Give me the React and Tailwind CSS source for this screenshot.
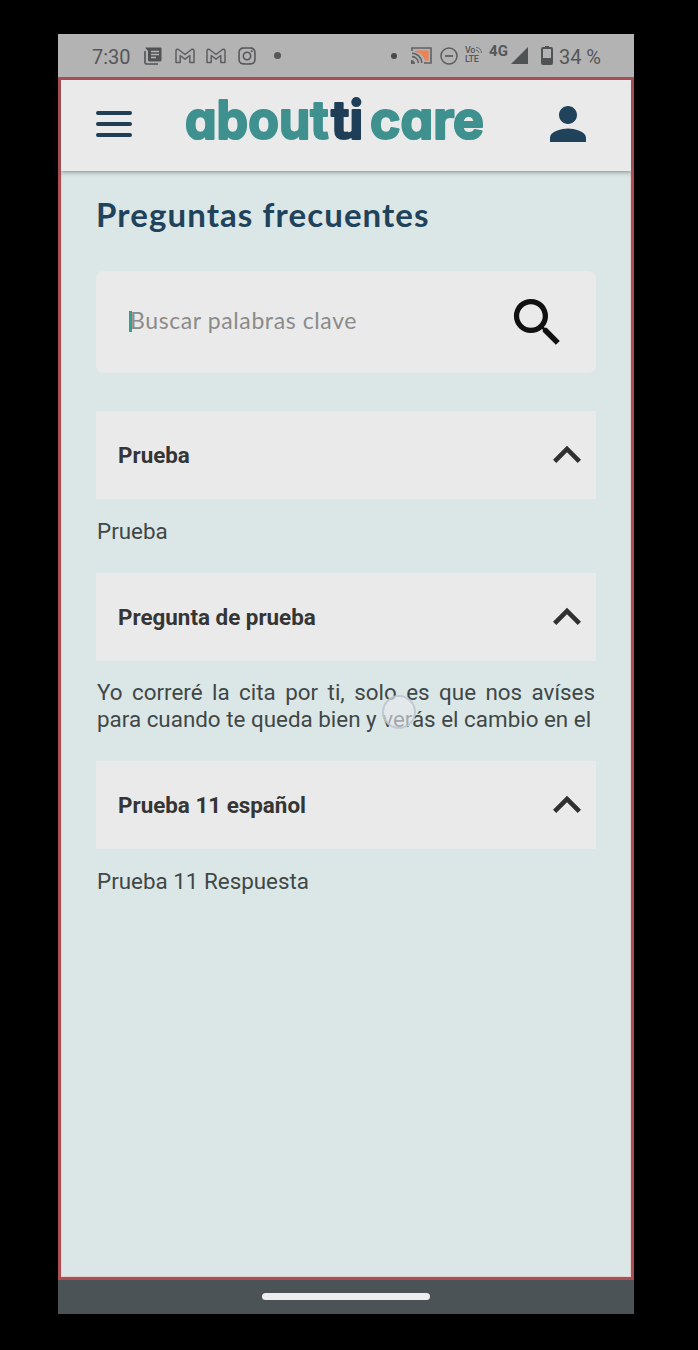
import { MdPerson, MdSearch, MdKeyboardArrowUp } from "react-icons/md";
import { FaInstagram } from "react-icons/fa";

function NewsIcon() {
  return (
    <svg className="h-[18px] w-[18px]" viewBox="0 0 18 18">
      <path d="M1 4v11.5a1.5 1.5 0 0 0 1.500 1.500H14" fill="none" stroke="#505354" strokeWidth="1.600" />
      <path d="M1 .5H16.500a1 1 0 0 1 1 1V13a1.500 1.500 0 0 1-1.500 1.500H5.500A1.500 1.500 0 0 1 4 13V4Z" fill="#505354" />
      <path d="M7 4.500h8M7 7.500h8M7 10.500h5" stroke="#b3b3b3" strokeWidth="1.300" />
    </svg>
  );
}

function MailIcon() {
  return (
    <svg className="h-4 w-5" viewBox="0 0 20 16" fill="none" stroke="#5c5f60" strokeWidth="1.500" strokeLinejoin="round">
      <path d="M1 2.500Q1.500.500 3.500 1.500L10 6.500l6.500-5Q18.500.500 19 2.500V14.500h-4.200V7.500L10 11.200 5.200 7.500v7H1Z" />
    </svg>
  );
}

function CastIcon() {
  return (
    <svg className="h-[17px] w-[21px]" viewBox="0 0 21 17">
      <path d="M4 3.500h13.500v10H14C12.500 8.500 9 5.500 4 5Z" fill="#ee8152" />
      <path d="M1 4V1h19v15h-7" fill="none" stroke="#606263" strokeWidth="1.600" />
      <path d="M1 6.200A9.800 9.800 0 0 1 10.800 16M1 9.600A6.400 6.400 0 0 1 7.400 16" fill="none" stroke="#606263" strokeWidth="1.600" />
      <path d="M0 13a4 4 0 0 1 4 4H0Z" fill="#606263" />
    </svg>
  );
}

function StatusBar() {
  return (
    <div className="flex h-[43px] shrink-0 items-center bg-[#b3b3b3] pl-[34px] pr-[33px] text-[20px] text-[#555758]">
      <span className="w-[52px] pt-[2px] text-[20px] leading-none">7:30</span>
      <div className="flex items-center">
        <NewsIcon />
        <span className="ml-[13px] flex"><MailIcon /></span>
        <span className="ml-[11px] flex"><MailIcon /></span>
        <FaInstagram className="ml-[11px] h-[20px] w-[20px]" />
        <span className="ml-[17px] h-[7px] w-[7px] rounded-full bg-[#555758]" />
      </div>
      <div className="ml-auto flex items-center">
        <span className="mr-[14px] h-[6px] w-[6px] rounded-full bg-[#454849]" />
        <CastIcon />
        <svg className="ml-[8px] h-[18px] w-[18px]" viewBox="0 0 18 18" fill="none" stroke="#5b5d5e">
          <circle cx="9" cy="9" r="8" strokeWidth="1.500" />
          <path d="M5 9h8" strokeWidth="1.800" />
        </svg>
        <div className="-mt-[2px] ml-[7px] flex w-[19px] flex-col text-[9px] font-medium leading-[9px] tracking-[-0.3px]">
          <span className="flex items-start">
            Vo
            <svg className="ml-px mt-px h-[6px] w-[6px]" viewBox="0 0 6 6" fill="none" stroke="#6b6d6e" strokeWidth="1">
              <path d="M0 .5Q5 .5 5.500 6M0 3Q2.500 3 3 6" />
            </svg>
          </span>
          <span>LTE</span>
        </div>
        <span className="-mt-[8px] ml-[5px] text-[15px] font-bold leading-none">4G</span>
        <svg className="ml-[3px] h-[17px] w-[17px]" viewBox="0 0 17 17"><path d="M17 0V17H0Z" fill="#505354" /></svg>
        <svg className="ml-[13px] h-[19px] w-[12px]" viewBox="0 0 12 19">
          <path d="M4 1.500V0h4v1.500" fill="#505354" />
          <rect x="1" y="2" width="10" height="16" rx="1" fill="none" stroke="#505354" strokeWidth="2" />
          <path d="M1 12h10v6H1Z" fill="#505354" />
        </svg>
        <span className="ml-[6px] whitespace-nowrap pt-[2px] text-[20px] leading-none">34 %</span>
      </div>
    </div>
  );
}

function Logo() {
  return (
    <svg
      className="h-[84px] w-[320px] font-[Inter,sans-serif] text-[53px] font-bold [font-feature-settings:'cv11']"
      viewBox="0 0 320 84"
      role="img"
      aria-label="aboutti care"
      strokeWidth="2.2"
      strokeLinejoin="round"
    >
      <text x="9" y="55.5" textLength="143.500" lengthAdjust="spacingAndGlyphs" fill="#3f918f" stroke="#3f918f">about</text>
      <text x="155" y="55.5" textLength="32" lengthAdjust="spacingAndGlyphs" fill="#1f3e57" stroke="#1f3e57">ti</text>
      <path d="M166 52.500Q176 54 180 48" fill="none" stroke="#1f3e57" strokeWidth="6.500" />
      <text x="194" y="55.5" textLength="114" lengthAdjust="spacingAndGlyphs" fill="#3f918f" stroke="#3f918f">care</text>
    </svg>
  );
}

function Header() {
  return (
    <header className="z-10 flex h-[91px] shrink-0 items-start bg-[#eaeaea] pl-[35px] pr-[36px] shadow-[0_2px_4px_rgba(60,75,75,0.4)]">
      <div className="mt-[31px] flex w-9 flex-col gap-[7px]">
        <span className="h-1 rounded-full bg-[#203f55]" />
        <span className="h-1 rounded-full bg-[#203f55]" />
        <span className="h-1 rounded-full bg-[#203f55]" />
      </div>
      <div className="ml-[44px] mt-[3px]"><Logo /></div>
      <MdPerson className="ml-auto mt-[17px] h-[54px] w-[54px] text-[#20425a]" />
    </header>
  );
}

function Question({ title }) {
  return (
    <div className="flex h-[88px] items-center justify-between bg-[#eaeaea] pl-[22px] pr-[1px]">
      <h2 className="text-[22.4px] font-bold text-[#353535]">{title}</h2>
      <MdKeyboardArrowUp className="h-[56px] w-[56px] text-[#303030]" />
    </div>
  );
}

export default function App() {
  return (
    <div className="flex h-[1350px] w-[698px] justify-center bg-black py-[34px] pl-[58px] pr-[64px] font-[Roboto,sans-serif]">
      <div className="flex h-[1280px] w-[576px] flex-col">
        <StatusBar />
        <div className="flex h-[1203px] flex-col border-[3px] border-[#ab4f55] bg-[#dbe7e6]">
          <Header />
          <main className="relative flex-1 px-[35px] pt-[23px] shadow-[inset_0_0_0_1px_#e5cfcf]">
            <h1 className="h-[77px] whitespace-nowrap font-[Lato,sans-serif] text-[33px] font-bold leading-[40px] tracking-[1.1px] text-[#20425a]">Preguntas frecuentes</h1>
            <div className="flex h-[102px] items-center rounded-[8px] bg-[#eaeaea] pl-[33px] pr-[27px]">
              <span className="-mr-[2px] mb-[2px] h-[21px] w-[3px] shrink-0 bg-[#34a193]" />
              <span className="mb-[3px] whitespace-nowrap font-[Lato,sans-serif] text-[23px] leading-none tracking-[0.6px] text-[#8b8b8b]">Buscar palabras clave</span>
              <MdSearch className="ml-auto mt-px h-[63px] w-[63px] text-[#111]" />
            </div>
            <div className="mt-[38px] text-[22.4px] leading-[27px] text-[#414747]">
              <Question title="Prueba" />
              <p className="mb-[28px] ml-px mt-[19px]">Prueba</p>
              <Question title="Pregunta de prueba" />
              <p className="mb-[28px] ml-px mr-px mt-[18px] text-justify">Yo correré la cita por ti, solo es que nos avíses para cuando te queda bien y verás el cambio en el</p>
              <Question title="Prueba 11 español" />
              <p className="ml-px mt-[19px]">Prueba 11 Respuesta</p>
            </div>
            <span className="absolute left-[321px] top-[524px] h-[34px] w-[34px] rounded-full border-2 border-[#b9c2cf]/80 bg-[#e8eaed]/60" />
          </main>
        </div>
        <div className="flex h-[34px] items-center justify-center bg-[#4b5356] pb-[2px]">
          <span className="h-[7px] w-[168px] rounded-full bg-[#eeedf0]" />
        </div>
      </div>
    </div>
  );
}
